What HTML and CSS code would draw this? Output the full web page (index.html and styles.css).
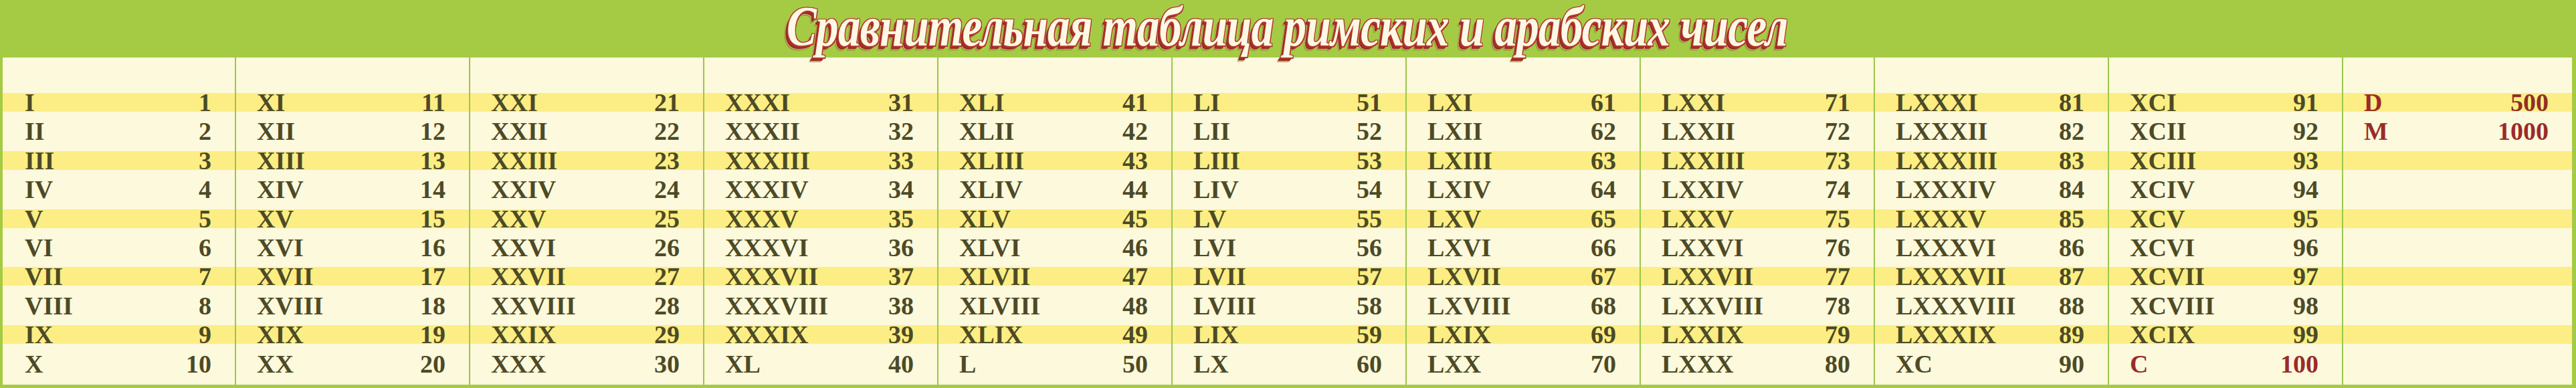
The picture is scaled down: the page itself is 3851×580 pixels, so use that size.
FILE: index.html
```html
<!DOCTYPE html>
<html lang="ru">
<head>
<meta charset="utf-8">
<title>Сравнительная таблица римских и арабских чисел</title>
<link rel="stylesheet" href="styles.css">
</head>
<body>
<div class="page">
  <header class="head">
    <h1 class="title">Сравнительная таблица римских и арабских чисел</h1>
  </header>
  <div class="table" id="table"></div>
</div>
<script src="script.js"></script>
</body>
</html>
```
FILE: styles.css
```css
html, body {
  margin: 0;
  padding: 0;
}
body {
  width: 3851px;
  height: 580px;
  overflow: hidden;
  background: #a5cb45;
}
.page {
  display: flex;
  flex-direction: column;
  height: 580px;
  padding: 0 6px 5px 4px;
  box-sizing: border-box;
}
.head {
  height: 86px;
  flex: none;
  display: flex;
  justify-content: center;
}
.title {
  margin: 0;
  font-family: "Liberation Serif", "Times New Roman", serif;
  font-weight: bold;
  font-style: italic;
  font-size: 84px;
  line-height: 80px;
  color: #fff8e4;
  letter-spacing: -1px;
  transform: scaleX(0.8);
  white-space: nowrap;
  text-shadow:
    1px 0 0 #b3372c, -1px 0 0 #b3372c, 0 1px 0 #b3372c, 0 -1px 0 #b3372c,
    1.5px 1.5px 0 #b3372c, -1.5px -1.5px 0 #b3372c, 1.5px -1.5px 0 #b3372c,
    -2px 2px 0 #a8332a, -3px 3px 0 #a3302a, -4px 4px 0 #9a2c26, -5px 5px 0 #932a24,
    -6px 6px 0 #d9b878, -7px 7px 1px rgba(110, 70, 20, 0.55);
}
.table {
  flex: 1;
  display: grid;
  grid-template-columns: 347px repeat(9, 350px) 344px;
  background: #fdf9dc;
}
.col {
  display: flex;
  flex-direction: column;
  gap: 15.4px;
  padding-top: 53px;
  box-sizing: border-box;
}
.col + .col {
  border-left: 2px solid #9cc64a;
}
.row {
  height: 28px;
  flex: none;
  display: flex;
  justify-content: space-between;
  padding: 0 35px 0 33px;
  font-family: "Liberation Serif", "Times New Roman", serif;
  font-weight: bold;
  font-size: 38px;
  line-height: 28px;
  color: #4d4a26;
}
.col + .col .row {
  padding-left: 31px;
}
.row.band {
  background: #fcee84;
}
.red {
  color: #9a2b2b;
}
.red-num {
  color: #8f2f25;
}
```
FILE: script.js
```js
(function () {
  function roman(n) {
    var map = [[100, 'C'], [90, 'XC'], [50, 'L'], [40, 'XL'], [10, 'X'], [9, 'IX'], [5, 'V'], [4, 'IV'], [1, 'I']];
    var s = '';
    for (var i = 0; i < map.length; i++) {
      while (n >= map[i][0]) { s += map[i][1]; n -= map[i][0]; }
    }
    return s;
  }
  var table = document.getElementById('table');
  for (var c = 0; c < 11; c++) {
    var col = document.createElement('div');
    col.className = 'col';
    for (var r = 0; r < 10; r++) {
      var row = document.createElement('div');
      row.className = 'row' + (r % 2 === 0 ? ' band' : '');
      var a = document.createElement('span');
      var b = document.createElement('span');
      if (c < 10) {
        var n = c * 10 + r + 1;
        a.textContent = roman(n);
        b.textContent = String(n);
        if (n === 100) { a.className = 'red'; b.className = 'red'; }
      } else {
        if (r === 0) { a.textContent = 'D'; b.textContent = '500'; a.className = 'red'; b.className = 'red-num'; }
        if (r === 1) { a.textContent = 'M'; b.textContent = '1000'; a.className = 'red'; b.className = 'red'; }
      }
      row.appendChild(a);
      row.appendChild(b);
      col.appendChild(row);
    }
    table.appendChild(col);
  }
})();
```
